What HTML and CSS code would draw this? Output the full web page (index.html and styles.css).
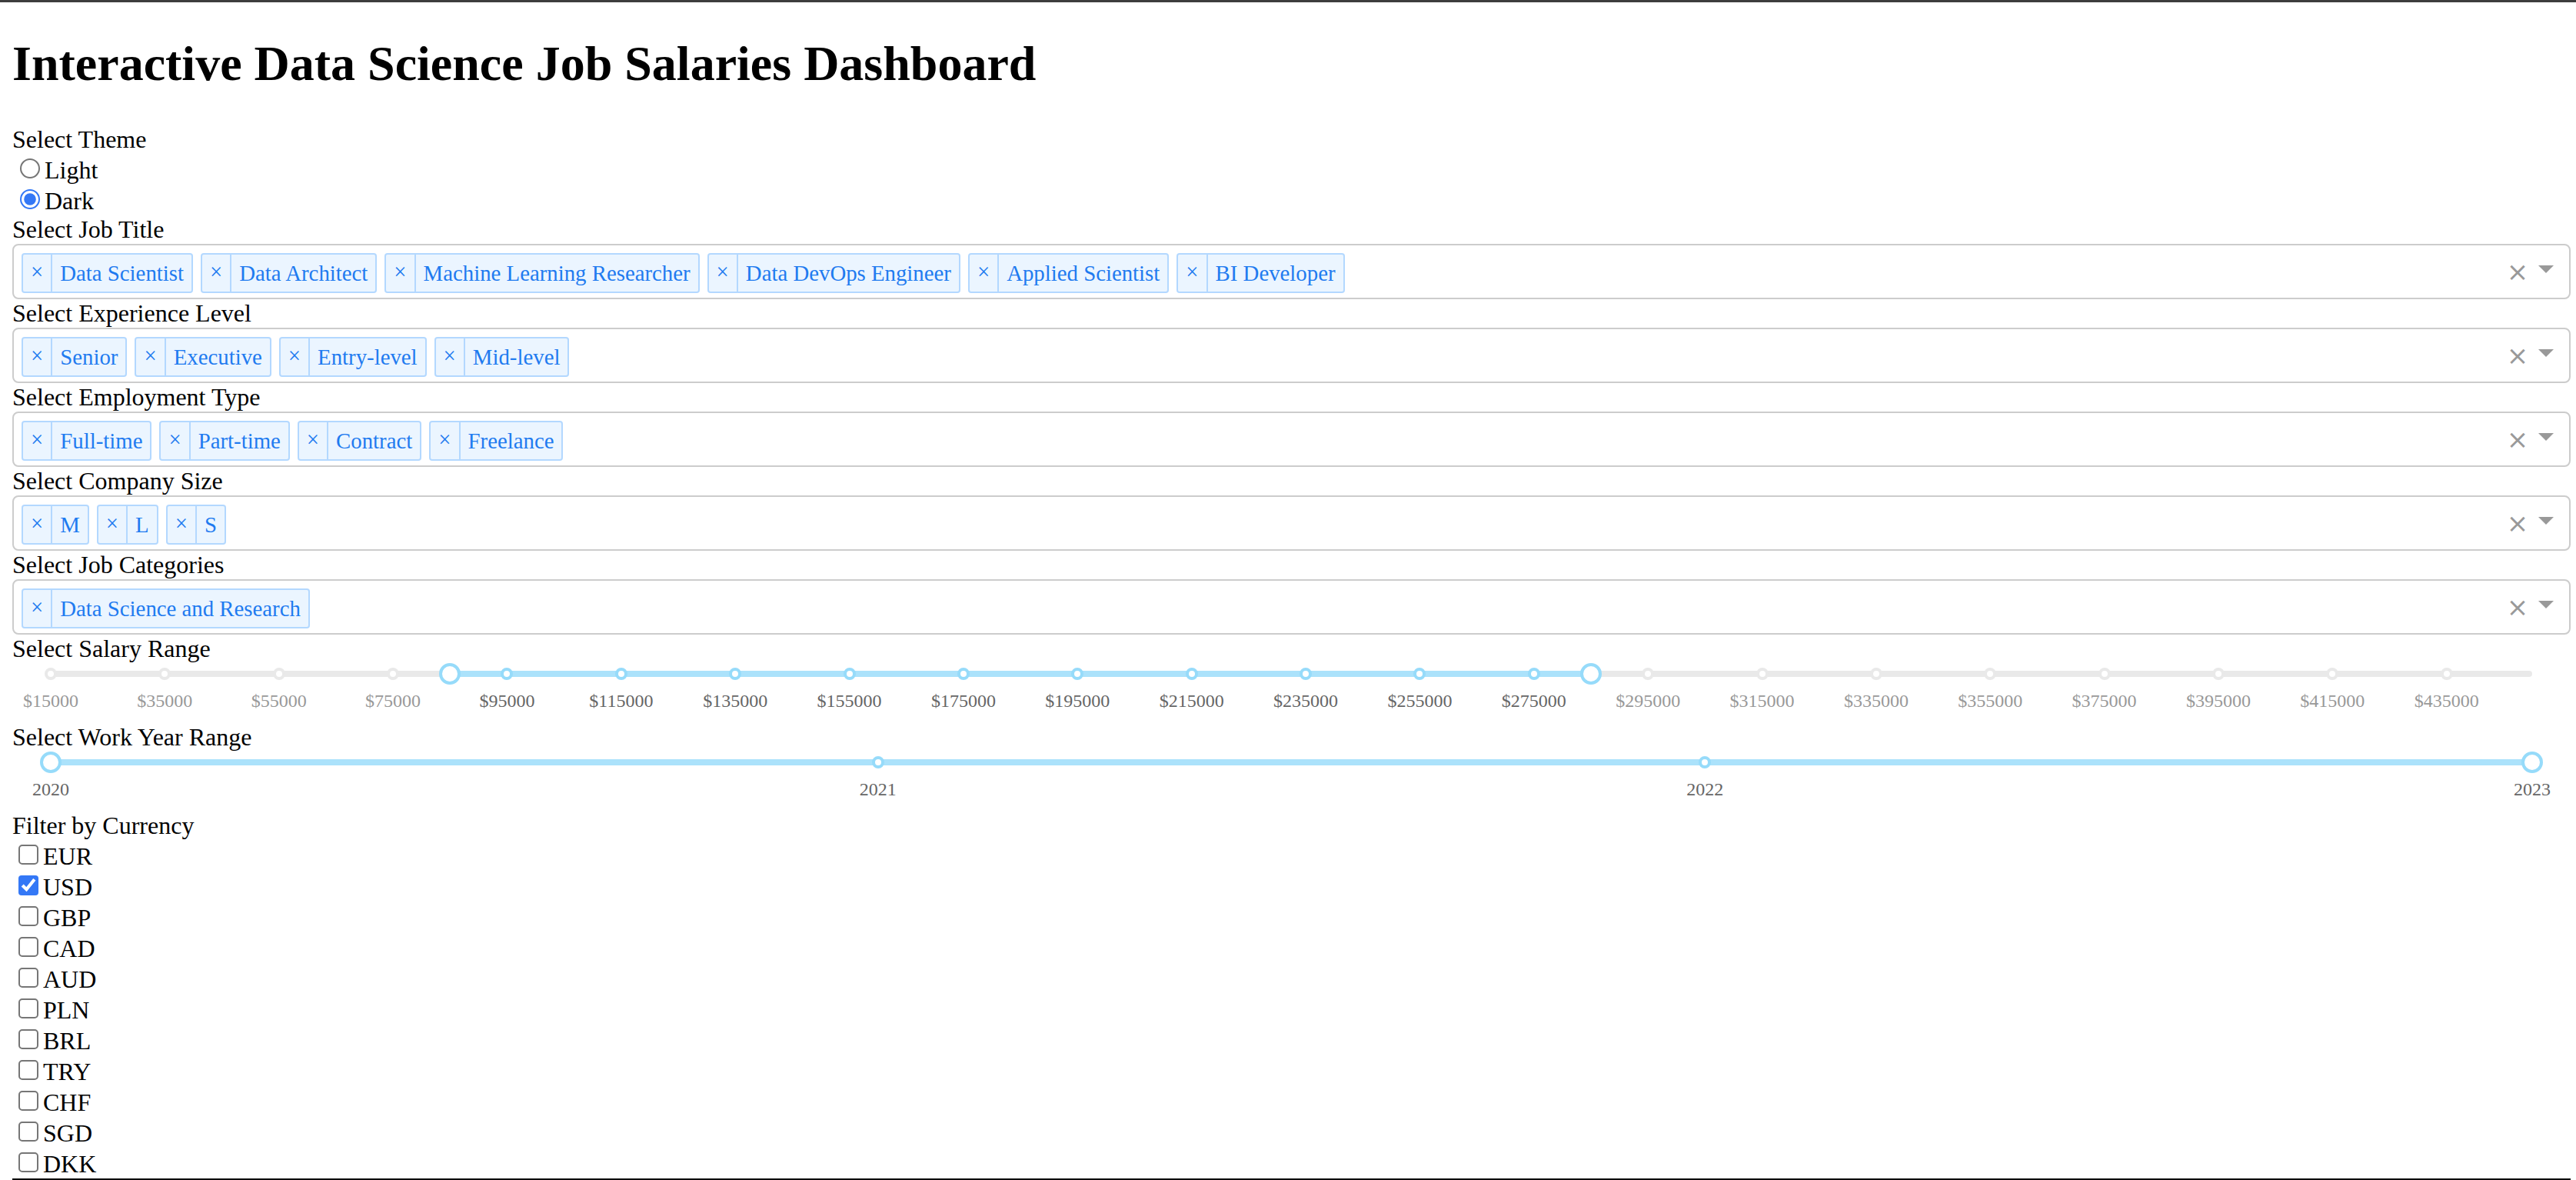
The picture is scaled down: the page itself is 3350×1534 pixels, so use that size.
FILE: index.html
```html
<!DOCTYPE html>
<html lang="en">
<head>
<meta charset="utf-8">
<title>Interactive Data Science Job Salaries Dashboard</title>
<link rel="stylesheet" href="styles.css">
</head>
<body>
<h1 class="title">Interactive Data Science Job Salaries Dashboard</h1>

<div class="field-label">Select Theme</div>
<div class="options">
  <label class="option"><input type="radio" name="theme">Light</label>
  <label class="option"><input type="radio" name="theme" checked>Dark</label>
</div>

<div class="field-label">Select Job Title</div>
<div class="select">
  <div class="select-values">
    <span class="chip"><span class="chip-x">×</span><span class="chip-label">Data Scientist</span></span>
    <span class="chip"><span class="chip-x">×</span><span class="chip-label">Data Architect</span></span>
    <span class="chip"><span class="chip-x">×</span><span class="chip-label">Machine Learning Researcher</span></span>
    <span class="chip"><span class="chip-x">×</span><span class="chip-label">Data DevOps Engineer</span></span>
    <span class="chip"><span class="chip-x">×</span><span class="chip-label">Applied Scientist</span></span>
    <span class="chip"><span class="chip-x">×</span><span class="chip-label">BI Developer</span></span>
  </div>
  <span class="select-clear">×</span>
  <span class="select-arrow-zone"><span class="select-arrow"></span></span>
</div>

<div class="field-label">Select Experience Level</div>
<div class="select">
  <div class="select-values">
    <span class="chip"><span class="chip-x">×</span><span class="chip-label">Senior</span></span>
    <span class="chip"><span class="chip-x">×</span><span class="chip-label">Executive</span></span>
    <span class="chip"><span class="chip-x">×</span><span class="chip-label">Entry-level</span></span>
    <span class="chip"><span class="chip-x">×</span><span class="chip-label">Mid-level</span></span>
  </div>
  <span class="select-clear">×</span>
  <span class="select-arrow-zone"><span class="select-arrow"></span></span>
</div>

<div class="field-label">Select Employment Type</div>
<div class="select">
  <div class="select-values">
    <span class="chip"><span class="chip-x">×</span><span class="chip-label">Full-time</span></span>
    <span class="chip"><span class="chip-x">×</span><span class="chip-label">Part-time</span></span>
    <span class="chip"><span class="chip-x">×</span><span class="chip-label">Contract</span></span>
    <span class="chip"><span class="chip-x">×</span><span class="chip-label">Freelance</span></span>
  </div>
  <span class="select-clear">×</span>
  <span class="select-arrow-zone"><span class="select-arrow"></span></span>
</div>

<div class="field-label">Select Company Size</div>
<div class="select">
  <div class="select-values">
    <span class="chip"><span class="chip-x">×</span><span class="chip-label">M</span></span>
    <span class="chip"><span class="chip-x">×</span><span class="chip-label">L</span></span>
    <span class="chip"><span class="chip-x">×</span><span class="chip-label">S</span></span>
  </div>
  <span class="select-clear">×</span>
  <span class="select-arrow-zone"><span class="select-arrow"></span></span>
</div>

<div class="field-label">Select Job Categories</div>
<div class="select">
  <div class="select-values">
    <span class="chip"><span class="chip-x">×</span><span class="chip-label">Data Science and Research</span></span>
  </div>
  <span class="select-clear">×</span>
  <span class="select-arrow-zone"><span class="select-arrow"></span></span>
</div>

<div class="field-label">Select Salary Range</div>
<div class="slider-wrap">
  <div class="slider">
    <div class="rail"></div>
    <div class="track" style="left:16.092%;width:45.977%"></div>
    <div class="step">
      <span class="dot" style="left:0%"></span>
      <span class="dot" style="left:4.5977%"></span>
      <span class="dot" style="left:9.1954%"></span>
      <span class="dot" style="left:13.7931%"></span>
      <span class="dot active" style="left:18.3908%"></span>
      <span class="dot active" style="left:22.9885%"></span>
      <span class="dot active" style="left:27.5862%"></span>
      <span class="dot active" style="left:32.1839%"></span>
      <span class="dot active" style="left:36.7816%"></span>
      <span class="dot active" style="left:41.3793%"></span>
      <span class="dot active" style="left:45.9770%"></span>
      <span class="dot active" style="left:50.5747%"></span>
      <span class="dot active" style="left:55.1724%"></span>
      <span class="dot active" style="left:59.7701%"></span>
      <span class="dot" style="left:64.3678%"></span>
      <span class="dot" style="left:68.9655%"></span>
      <span class="dot" style="left:73.5632%"></span>
      <span class="dot" style="left:78.1609%"></span>
      <span class="dot" style="left:82.7586%"></span>
      <span class="dot" style="left:87.3563%"></span>
      <span class="dot" style="left:91.9540%"></span>
      <span class="dot" style="left:96.5517%"></span>
    </div>
    <div class="handle" style="left:16.092%"></div>
    <div class="handle" style="left:62.069%"></div>
    <div class="marks">
      <span class="mark" style="left:0%">$15000</span>
      <span class="mark" style="left:4.5977%">$35000</span>
      <span class="mark" style="left:9.1954%">$55000</span>
      <span class="mark" style="left:13.7931%">$75000</span>
      <span class="mark active" style="left:18.3908%">$95000</span>
      <span class="mark active" style="left:22.9885%">$115000</span>
      <span class="mark active" style="left:27.5862%">$135000</span>
      <span class="mark active" style="left:32.1839%">$155000</span>
      <span class="mark active" style="left:36.7816%">$175000</span>
      <span class="mark active" style="left:41.3793%">$195000</span>
      <span class="mark active" style="left:45.9770%">$215000</span>
      <span class="mark active" style="left:50.5747%">$235000</span>
      <span class="mark active" style="left:55.1724%">$255000</span>
      <span class="mark active" style="left:59.7701%">$275000</span>
      <span class="mark" style="left:64.3678%">$295000</span>
      <span class="mark" style="left:68.9655%">$315000</span>
      <span class="mark" style="left:73.5632%">$335000</span>
      <span class="mark" style="left:78.1609%">$355000</span>
      <span class="mark" style="left:82.7586%">$375000</span>
      <span class="mark" style="left:87.3563%">$395000</span>
      <span class="mark" style="left:91.9540%">$415000</span>
      <span class="mark" style="left:96.5517%">$435000</span>
    </div>
  </div>
</div>

<div class="field-label">Select Work Year Range</div>
<div class="slider-wrap">
  <div class="slider">
    <div class="rail"></div>
    <div class="track" style="left:0%;width:100%"></div>
    <div class="step">
      <span class="dot active" style="left:0%"></span>
      <span class="dot active" style="left:33.3333%"></span>
      <span class="dot active" style="left:66.6667%"></span>
      <span class="dot active" style="left:100%"></span>
    </div>
    <div class="handle" style="left:0%"></div>
    <div class="handle" style="left:100%"></div>
    <div class="marks">
      <span class="mark active" style="left:0%">2020</span>
      <span class="mark active" style="left:33.3333%">2021</span>
      <span class="mark active" style="left:66.6667%">2022</span>
      <span class="mark active" style="left:100%">2023</span>
    </div>
  </div>
</div>

<div class="field-label">Filter by Currency</div>
<div class="options">
  <label class="option"><input type="checkbox">EUR</label>
  <label class="option"><input type="checkbox" checked>USD</label>
  <label class="option"><input type="checkbox">GBP</label>
  <label class="option"><input type="checkbox">CAD</label>
  <label class="option"><input type="checkbox">AUD</label>
  <label class="option"><input type="checkbox">PLN</label>
  <label class="option"><input type="checkbox">BRL</label>
  <label class="option"><input type="checkbox">TRY</label>
  <label class="option"><input type="checkbox">CHF</label>
  <label class="option"><input type="checkbox">SGD</label>
  <label class="option"><input type="checkbox">DKK</label>
</div>
<div class="rule"></div>
</body>
</html>
```

FILE: styles.css
```css
html {
  zoom: 2;
  border-top: 1.5px solid #3d3d3d;
  overflow: hidden;
  background: #fff;
}

body {
  margin: 0 3.5px 0 8px;
  font-family: "Liberation Serif", "Times New Roman", serif;
  font-size: 16px;
  color: #000;
}

.title {
  font-size: 32px;
  font-weight: bold;
  margin: 0.67em 0;
}

.field-label {
  display: block;
}

.options {
  display: block;
}

.option {
  display: block;
}

.option input {
  accent-color: #3478f6;
}

/* Dropdown */
.select {
  display: flex;
  align-items: center;
  height: 36px;
  box-sizing: border-box;
  border: 1px solid #ccc;
  border-radius: 4px;
  background: #fff;
  color: #333;
  overflow: hidden;
}

.select-values {
  flex: 1;
  align-self: flex-start;
  display: flex;
  align-items: flex-start;
  min-width: 0;
}

.chip {
  display: inline-flex;
  font-size: 14.4px;
  line-height: 1.4;
  margin: 5px 0 0 5px;
  border: 1px solid rgba(0, 126, 255, 0.24);
  background-color: rgba(0, 126, 255, 0.08);
  border-radius: 2px;
  color: #1f7bf0;
  white-space: nowrap;
}

.chip-x {
  padding: 1px 5px 3px;
  border-right: 1px solid rgba(0, 126, 255, 0.24);
}

.chip-label {
  padding: 2px 5px;
}

.select-clear {
  width: 17px;
  text-align: center;
  color: #999;
  font-family: "DejaVu Sans", sans-serif;
  font-size: 17px;
  line-height: 1;
}

.select-arrow-zone {
  width: 25px;
  box-sizing: border-box;
  padding-right: 5px;
  display: flex;
  justify-content: center;
  align-items: center;
}

.select-arrow {
  display: block;
  width: 0;
  height: 0;
  border-style: solid;
  border-width: 5px 5px 2.5px;
  border-color: #999 transparent transparent;
}

/* Slider */
.slider-wrap {
  padding: 0 25px 25px;
}

.slider {
  position: relative;
  height: 14px;
  padding: 5px 0;
  box-sizing: border-box;
}

.rail,
.track,
.step {
  position: absolute;
  top: 5px;
  height: 4px;
}

.rail {
  left: 0;
  width: 100%;
  background: #e9e9e9;
  border-radius: 6px;
}

.track {
  background: #abe2fb;
  border-radius: 6px;
}

.step {
  left: 0;
  width: 100%;
}

.dot {
  position: absolute;
  bottom: -2px;
  width: 8px;
  height: 8px;
  box-sizing: border-box;
  border: 2px solid #e9e9e9;
  background: #fff;
  border-radius: 50%;
  transform: translateX(-50%);
}

.dot.active {
  border-color: #96dbfa;
}

.handle {
  position: absolute;
  top: 0;
  width: 14px;
  height: 14px;
  box-sizing: border-box;
  border: 2px solid #96dbfa;
  background: #fff;
  border-radius: 50%;
  transform: translateX(-50%);
}

.marks {
  position: absolute;
  top: 18px;
  left: 0;
  width: 100%;
  font-size: 12px;
}

.mark {
  position: absolute;
  transform: translateX(-50%);
  color: #999;
  white-space: nowrap;
}

.mark.active {
  color: #666;
}

.rule {
  border-top: 1px solid #000;
}
```
